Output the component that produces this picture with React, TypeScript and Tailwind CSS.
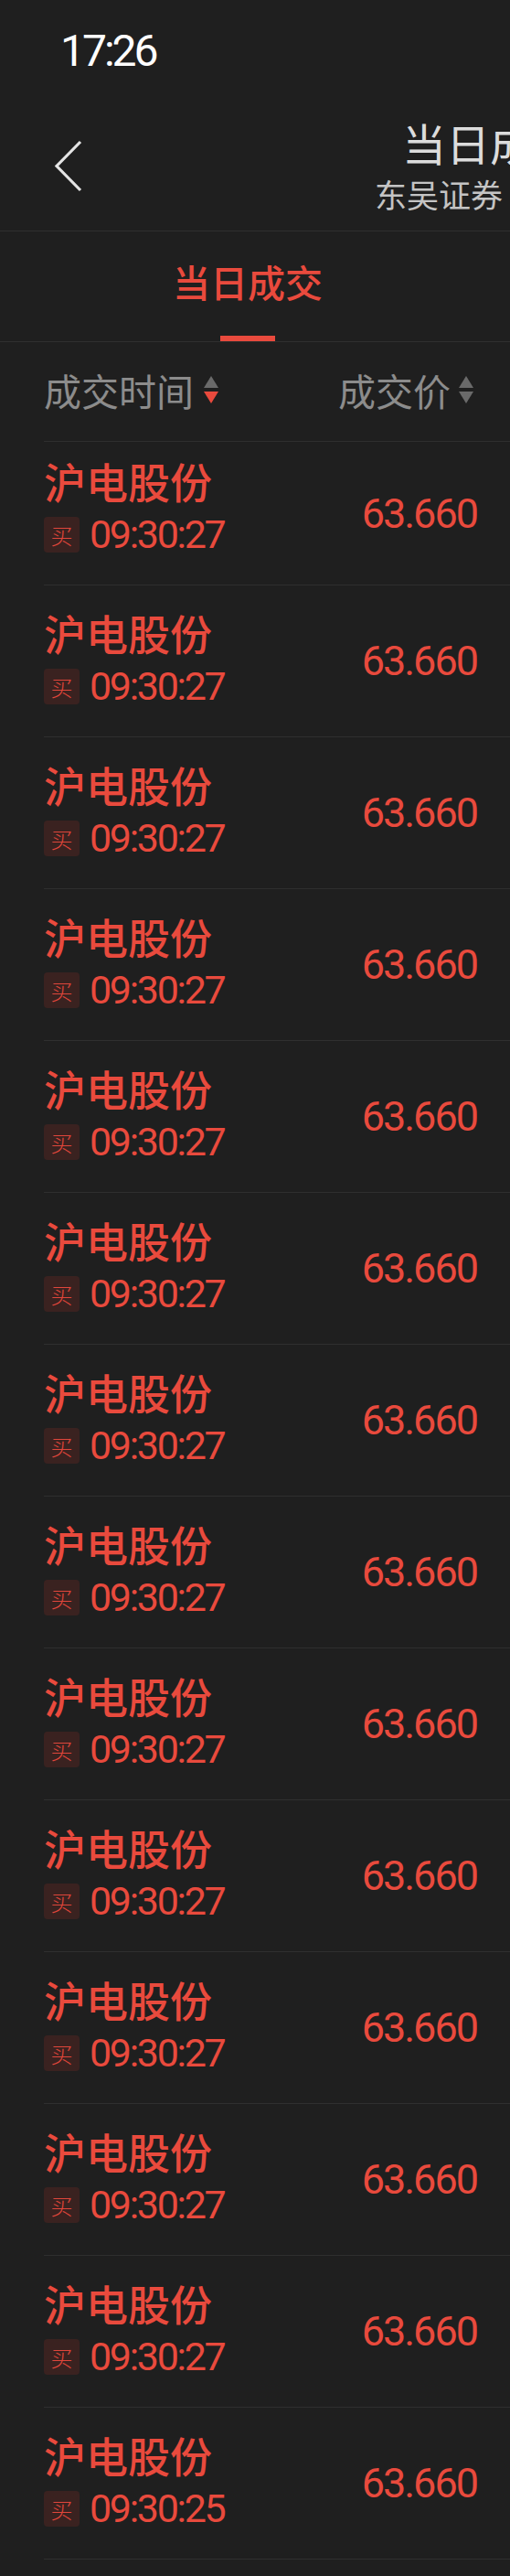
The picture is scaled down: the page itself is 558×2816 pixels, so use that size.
import { type FC } from 'react'

type Trade = {
  name: string
  side: string
  time: string
  price: string
}

const trades: Trade[] = [
  ...Array.from({ length: 13 }, () => ({ name: '沪电股份', side: '买', time: '09:30:27', price: '63.660' })),
  { name: '沪电股份', side: '买', time: '09:30:25', price: '63.660' },
]

const SortIcon: FC<{ active?: 'up' | 'down' }> = ({ active }) => (
  <svg width="16" height="31" viewBox="0 0 16 31" className="shrink-0">
    <polygon points="8,0 16,13 0,13" fill={active === 'up' ? '#e94a3d' : '#6a6a6a'} />
    <polygon points="0,17 16,17 8,30" fill={active === 'down' ? '#e94a3d' : '#6a6a6a'} />
  </svg>
)

const TradeRow: FC<{ trade: Trade; first?: boolean; last?: boolean }> = ({ trade, first, last }) => (
  <div
    className={`ml-[48px] border-t border-[#2f2f2f] flex items-center justify-between pr-[36px] ${
      last ? 'border-b' : ''
    }`}
  >
    <div className={first ? 'pt-[19px] pb-[35px]' : 'pt-[28px] pb-[35px]'}>
      <div className="text-[46px] leading-none font-medium text-[#e94a3d] font-['Noto_Sans_CJK_SC',sans-serif]">
        {trade.name}
      </div>
      <div className="mt-[17px] h-[39px] flex items-center">
        <span className="w-[39px] h-[39px] rounded-[4px] bg-[#3a2220] flex items-center justify-center text-[24px] leading-none font-light text-[#e0463b] font-['Noto_Sans_CJK_SC',sans-serif]">
          {trade.side}
        </span>
        <span className="ml-[11px] text-[43px] leading-none tracking-[-2.3px] text-[#e94a3d] font-['Roboto',sans-serif]">
          {trade.time}
        </span>
      </div>
    </div>
    <span className="text-[45px] leading-none tracking-[-2px] text-[#e94a3d] font-['Roboto',sans-serif]">
      {trade.price}
    </span>
  </div>
)

const App = () => {
  return (
    <div className="w-[558px] h-[2816px] overflow-hidden bg-[#1f1f1f] font-['Noto_Sans_CJK_SC',sans-serif]">
      {/* status bar */}
      <div className="h-[110px] pl-[66px] pt-[32px]">
        <span className="block text-[48px] leading-none tracking-[-3px] text-white font-['Roboto',sans-serif]">
          17:26
        </span>
      </div>

      {/* nav bar */}
      <div className="h-[143px] border-b border-[#2f2f2f] flex items-center">
        <svg width="32" height="57" viewBox="0 0 32 57" className="ml-[59px] shrink-0">
          <polyline points="29,2 3,28.5 29,55" fill="none" stroke="#e4e4e4" strokeWidth="3.2" />
        </svg>
        <div className="ml-[319px] mb-[3px] flex flex-col gap-[15px] whitespace-nowrap shrink-0">
          <span className="pl-[30px] text-[48px] leading-none text-[#dcdcdc]">当日成交</span>
          <span className="text-[35px] leading-none text-[#c4c4c4]">东吴证券</span>
        </div>
      </div>

      {/* tabs */}
      <div className="h-[121px] border-b border-[#2f2f2f] flex pl-[189px]">
        <div className="w-[164px] flex flex-col items-center pt-[34px]">
          <span className="text-[41px] leading-none font-medium text-[#e94a3d]">当日成交</span>
          <div className="mt-auto h-[6px] w-[60px] bg-[#e94a3d]" />
        </div>
      </div>

      {/* list header */}
      <div className="h-[108px] pb-[4px] flex items-center justify-between pl-[48px] pr-[40px]">
        <div className="flex items-center">
          <span className="text-[41px] leading-none text-[#8c8c8c]">成交时间</span>
          <span className="ml-[11px]">
            <SortIcon active="down" />
          </span>
        </div>
        <div className="flex items-center">
          <span className="text-[41px] leading-none text-[#8c8c8c]">成交价</span>
          <span className="ml-[9px]">
            <SortIcon />
          </span>
        </div>
      </div>

      {/* trades */}
      {trades.map((trade, i) => (
        <TradeRow key={i} trade={trade} first={i === 0} last={i === trades.length - 1} />
      ))}
    </div>
  )
}

export default App
